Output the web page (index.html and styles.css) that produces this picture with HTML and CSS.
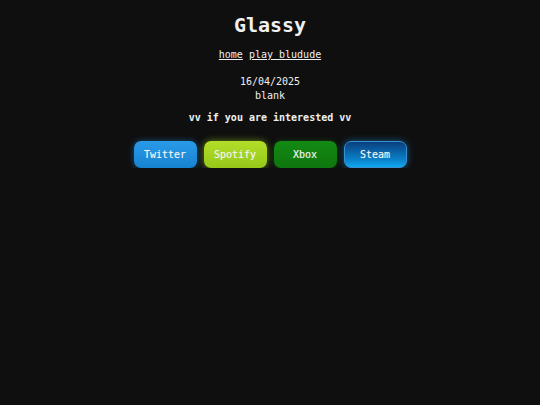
FILE: index.html
```html
<!DOCTYPE html>
<html>
<head>
<meta charset="utf-8">
<link rel="stylesheet" href="styles.css">
</head>
<body>
<main class="page">
  <h1 class="title">Glassy</h1>
  <nav class="nav"><a href="#">home</a> <a href="#">play bludude</a></nav>
  <div class="meta">
    <div>16/04/2025</div>
    <div>blank</div>
  </div>
  <p class="cta">vv if you are interested vv</p>
  <div class="buttons">
    <a class="btn twitter" href="#">Twitter</a>
    <a class="btn spotify" href="#">Spotify</a>
    <a class="btn xbox" href="#">Xbox</a>
    <a class="btn steam" href="#">Steam</a>
  </div>
</main>
</body>
</html>
```
FILE: styles.css
```css
html, body {
  margin: 0;
  padding: 0;
  background: #0f0f0f;
  color: #f0f0f0;
  font-family: "DejaVu Sans Mono", "Liberation Mono", monospace;
}
.page {
  display: flex;
  flex-direction: column;
  align-items: center;
  padding-top: 11px;
}
.title {
  margin: 0;
  font-size: 20px;
  font-weight: bold;
  line-height: 28px;
}
.nav {
  margin-top: 9px;
  font-size: 10px;
  line-height: 14px;
}
.nav a {
  color: #f0f0f0;
  text-decoration: underline;
}
.meta {
  margin-top: 13px;
  font-size: 10px;
  line-height: 14px;
  text-align: center;
}
.cta {
  margin: 8px 0 0;
  font-size: 10px;
  line-height: 14px;
  font-weight: bold;
}
.buttons {
  display: flex;
  gap: 7px;
  margin-top: 16px;
}
.btn {
  width: 63px;
  height: 27px;
  box-sizing: border-box;
  border-radius: 7px;
  display: flex;
  align-items: center;
  justify-content: center;
  font-size: 10px;
  color: #f4f4f4;
  text-decoration: none;
  text-shadow: 0 0 1px rgba(255, 255, 255, 0.4);
}
.twitter {
  background: linear-gradient(#2a9ae8, #1783d0);
  box-shadow: 0 0 6px rgba(29, 143, 224, 0.5);
}
.spotify {
  background: linear-gradient(#b2de28, #96c81a);
  box-shadow: 0 0 7px rgba(160, 210, 30, 0.6);
}
.xbox {
  background: linear-gradient(#138a13, #0e760e);
  box-shadow: 0 0 5px rgba(16, 124, 16, 0.5);
}
.steam {
  background: linear-gradient(#0a3f7e, #0a80c8 70%, #10a8ec);
  border: 1px solid #3a8fd0;
  box-shadow: 0 0 7px rgba(20, 150, 230, 0.55);
}
```
